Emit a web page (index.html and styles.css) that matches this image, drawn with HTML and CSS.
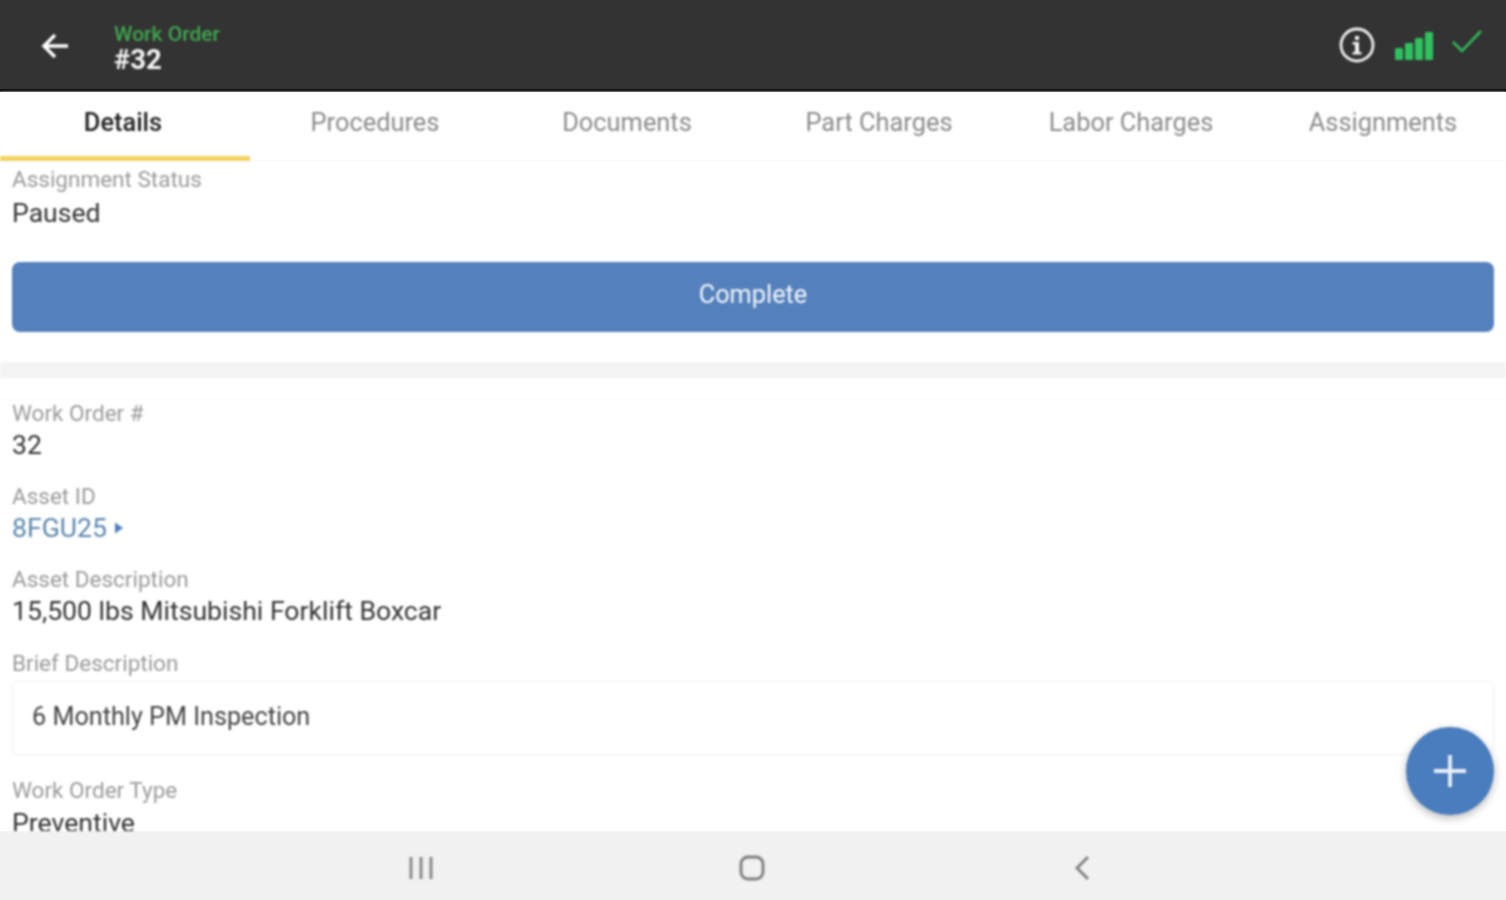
FILE: index.html
```html
<!DOCTYPE html>
<html lang="en">
<head>
<meta charset="utf-8">
<title>Work Order #32</title>
<link rel="stylesheet" href="styles.css">
</head>
<body>
<div class="app">
  <header class="topbar">
    <svg class="back soft" width="32" height="32" viewBox="0 0 32 32"><path d="M29 16H5M16 5 5 16l11 11" fill="none" stroke="#fff" stroke-width="3.4"/></svg>
    <div class="title soft">
      <div class="title-sub">Work Order</div>
      <div class="title-main">#32</div>
    </div>
    <div class="top-icons soft">
      <svg width="36" height="36" viewBox="0 0 36 36"><circle cx="18" cy="18" r="16" fill="none" stroke="#f0f0f0" stroke-width="2.8"/><path d="M16 9h4v4h-4zM13.500 15h6.500v10h2.500v2.500h-9V25H16v-7.500h-2.500z" fill="#f4f4f4"/></svg>
      <svg class="signal" width="40" height="30" viewBox="0 0 40 30"><g fill="#2fc15f"><rect x="1" y="17" width="8" height="12" rx="1"/><rect x="11" y="12" width="8" height="17" rx="1"/><rect x="21" y="7" width="8" height="22" rx="1"/><rect x="31" y="1" width="8" height="28" rx="1"/></g></svg>
      <svg class="check" width="32" height="28" viewBox="0 0 32 28"><path d="M2 14l9 9L30 3" fill="none" stroke="#2fb85c" stroke-width="2.6"/></svg>
    </div>
  </header>
  <nav class="tabs soft">
    <div class="tab tab-active">Details</div>
    <div class="tab">Procedures</div>
    <div class="tab">Documents</div>
    <div class="tab">Part Charges</div>
    <div class="tab">Labor Charges</div>
    <div class="tab">Assignments</div>
  </nav>
  <main class="content soft">
    <section class="status">
      <div class="label">Assignment Status</div>
      <div class="value">Paused</div>
      <button class="complete" type="button">Complete</button>
    </section>
    <div class="divider"></div>
    <section class="details">
      <div class="field">
        <div class="label">Work Order #</div>
        <div class="value">32</div>
      </div>
      <div class="field">
        <div class="label">Asset ID</div>
        <div class="value link">8FGU25 <svg class="caret" width="10" height="14" viewBox="0 0 10 14"><path d="M1 1.500 9 7l-8 5.500z" fill="#4f7fb8"/></svg></div>
      </div>
      <div class="field">
        <div class="label">Asset Description</div>
        <div class="value">15,500 lbs Mitsubishi Forklift Boxcar</div>
      </div>
      <div class="field">
        <div class="label">Brief Description</div>
        <div class="box">6 Monthly PM Inspection</div>
      </div>
      <div class="field field-type">
        <div class="label">Work Order Type</div>
        <div class="value">Preventive</div>
      </div>
    </section>
    <button class="fab" type="button" aria-label="Add">
      <svg width="32" height="32" viewBox="0 0 32 32"><path d="M16 0v32M0 16h32" stroke="#e6eef7" stroke-width="3.800"/></svg>
    </button>
  </main>
  <footer class="sysnav">
    <svg class="soft" width="26" height="24" viewBox="0 0 26 24"><path d="M3 1v22M13 1v22M23 1v22" stroke="#8a8a8a" stroke-width="3"/></svg>
    <svg class="soft" width="26" height="26" viewBox="0 0 26 26"><rect x="2" y="2" width="22" height="22" rx="7" fill="none" stroke="#7c7c7c" stroke-width="2.800"/></svg>
    <svg class="soft" width="18" height="26" viewBox="0 0 18 26"><path d="M15 2 4 13l11 11" fill="none" stroke="#7c7c7c" stroke-width="2.800"/></svg>
  </footer>
</div>
</body>
</html>
```
FILE: styles.css
```css
* { box-sizing: border-box; }
html, body { margin: 0; padding: 0; }
body { font-family: Roboto, "Liberation Sans", sans-serif; background: #fff; }
.app { width: 1506px; height: 900px; display: flex; flex-direction: column; overflow: hidden; }
.soft { filter: blur(.8px); }

.topbar { height: 92px; flex: none; background: #333333; border-bottom: 3px solid #111; display: flex; align-items: center; padding: 0 24px 0 39px; }
.back { flex: none; margin-top: 2px; }
.title { margin-left: 43px; padding-top: 9px; }
.title-sub { font-size: 21px; line-height: 22px; font-weight: 500; color: #3fa64f; }
.title-main { font-size: 27.500px; line-height: 30px; font-weight: 700; color: #f5f5f5; }
.top-icons { margin-left: auto; display: flex; align-items: center; }
.signal { margin-left: 19px; margin-top: 2px; }
.check { margin-left: 17px; margin-top: -6px; margin-right: -1px; }

.tabs { height: 70px; flex: none; display: grid; grid-template-columns: 250px repeat(5, 252px); background: #fff; border-bottom: 1px solid #f3f3f3; overflow: hidden; }
.tab { display: flex; align-items: center; justify-content: center; padding: 0 2px 9px 0; font-size: 25.400px; color: #8b8b8b; white-space: nowrap; }
.tab-active { color: #222; font-weight: 500; border-bottom: 5px solid #f4d35e; padding: 0 4px 5px 0; }

.content { flex: 1; position: relative; overflow: hidden; background: #fff; }
.label { font-size: 22.500px; line-height: 24px; color: #9a9a9a; }
.value { font-size: 26.600px; line-height: 32px; color: #333; }
.link { color: #5b86ae; display: flex; align-items: center; gap: 7px; }
.caret { flex: none; }

.status { padding: 5px 12px 0; height: 200px; }
.status .value { margin-top: 6px; }
.complete { display: block; width: 100%; height: 70px; margin-top: 33px; padding: 0 0 6px; border: 0; border-radius: 8px; background: #5480bb; color: #f2f6fb; font: 400 25.300px Roboto, "Liberation Sans", sans-serif; }

.divider { height: 16px; background: #f3f3f3; }

.details { margin-top: 19px; padding: 3px 12px 0; border-top: 1px solid #f8f8f8; }
.field { height: 83.200px; }
.field .value { margin-top: 4px; }
.box { margin-top: 6px; height: 74px; padding: 0 19px 3px; display: flex; align-items: center; border: 1px solid #f1f1f1; border-radius: 6px; font-size: 25.200px; color: #444; background: #fff; }
.field-type { margin-top: 44.200px; }
.field-type .value { margin-top: 13px; line-height: 16px; }

.fab { position: absolute; right: 12px; top: 565px; width: 88px; height: 88px; padding: 0; border: 0; border-radius: 50%; background: #4a7dbd; box-shadow: 0 3px 8px rgba(0,0,0,.28); display: flex; align-items: center; justify-content: center; }

.sysnav { height: 69px; flex: none; background: #f1f1f1; display: flex; align-items: center; padding-top: 5px; }
.sysnav svg:nth-child(1) { margin-left: 408px; }
.sysnav svg:nth-child(2) { margin-left: 305px; }
.sysnav svg:nth-child(3) { margin-left: 308px; }
```
